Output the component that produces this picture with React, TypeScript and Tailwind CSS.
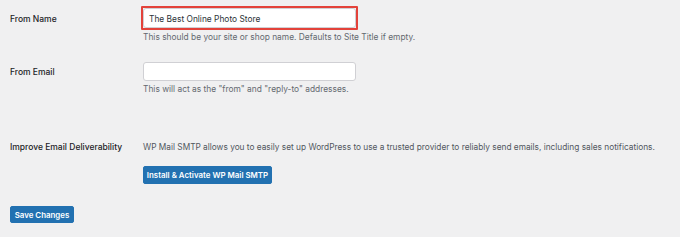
import React from 'react'

export default function App() {
  return (
    <div className="w-[680px] h-[237px] bg-[#f0f0f1] pl-[10px] pt-[6px] text-[8.4px] leading-[12px] text-[#1d2327] font-[family-name:Inter,sans-serif] overflow-hidden whitespace-nowrap">
      {/* From Name */}
      <div className="flex items-center h-[24px]">
        <div className="w-[131px] shrink-0 font-medium text-[8.5px] pt-[2px]">From Name</div>
        <div className="border-2 border-[#e3423a] rounded-[1px]">
          <div className="w-[213px] h-[20px] bg-white border border-[#d0d0d4] rounded-[3px] flex items-center px-[5px] pt-px text-[#2c3338]">
            The Best Online Photo Store
          </div>
        </div>
      </div>
      <p className="ml-[133px] mt-px text-[#646970]">This should be your site or shop name. Defaults to Site Title if empty.</p>

      {/* From Email */}
      <div className="flex items-center h-[19px] mt-[19px]">
        <div className="w-[133px] shrink-0 font-medium text-[8.5px]">From Email</div>
        <div className="w-[213px] h-[19px] bg-white border border-[#d0d0d4] rounded-[3px]"></div>
      </div>
      <p className="ml-[133px] mt-[2px] text-[#646970]">This will act as the "from" and "reply-to" addresses.</p>

      {/* Improve Email Deliverability */}
      <div className="flex items-center mt-[46px]">
        <div className="w-[133px] shrink-0 font-medium text-[8.5px]">Improve Email Deliverability</div>
        <p className="text-[#50575e] text-[8.3px]">WP Mail SMTP allows you to easily set up WordPress to use a trusted provider to reliably send emails, including sales notifications.</p>
      </div>
      <div className="ml-[133px] mt-[13px]">
        <button className="h-[18px] w-[129px] bg-[#2271b1] rounded-[2px] text-white font-semibold text-[7.9px] border border-[#2271b1]">
          Install &amp; Activate WP Mail SMTP
        </button>
      </div>

      {/* Save */}
      <div className="mt-[22px]">
        <button className="h-[17px] w-[64px] bg-[#2271b1] rounded-[2px] text-white font-semibold text-[7.9px] border border-[#2271b1]">
          Save Changes
        </button>
      </div>
    </div>
  )
}
